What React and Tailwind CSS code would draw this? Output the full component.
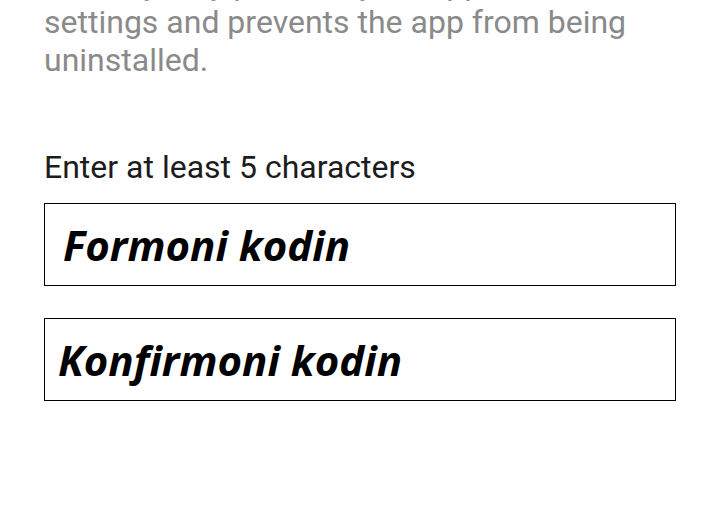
import React from 'react';

const App = () => {
  return (
    <div className="w-[720px] h-[525px] overflow-hidden bg-white" style={{ fontFamily: 'Roboto, sans-serif' }}>
      <div className="px-[44px]">
        <p className="-mt-[35px] text-[32px] leading-[38px] text-[#8a8a8a] whitespace-nowrap">
          Security only protects your app
          <br />
          settings and prevents the app from being
          <br />
          uninstalled.
        </p>

        <p className="mt-[69px] text-[32px] leading-[38px] text-[#1c1c1c]">Enter at least 5 characters</p>

        <div className="mt-[17px] flex flex-col gap-[32px]">
          <div className="h-[83px] border border-black flex items-center pl-[18px]">
            <span className="text-[42px] font-bold italic text-black" style={{ fontFamily: '"Open Sans", sans-serif' }}>
              Formoni kodin
            </span>
          </div>
          <div className="h-[83px] border border-black flex items-center pl-[13px]">
            <span className="text-[42px] font-bold italic text-black" style={{ fontFamily: '"Open Sans", sans-serif' }}>
              Konfirmoni kodin
            </span>
          </div>
        </div>
      </div>
    </div>
  );
};

export default App;
